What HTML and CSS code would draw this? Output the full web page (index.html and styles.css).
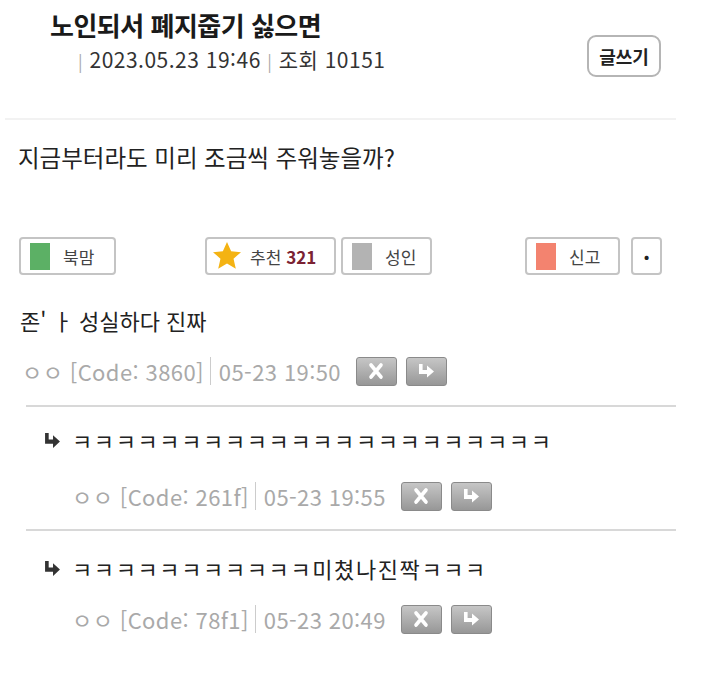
FILE: index.html
```html
<!DOCTYPE html>
<html lang="ko">
<head>
    <meta charset="UTF-8">
    <title>노인되서 폐지줍기 싫으면</title>
    <link rel="stylesheet" href="styles.css">
</head>
<body>

<div class="page">
    <div class="post-head">
        <div class="head-text">
            <h1 class="post-title">노인되서 폐지줍기 싫으면</h1>
            <div class="post-meta"><span class="bar">|</span> 2023.05.23 19:46 <span class="bar">|</span> 조회 10151</div>
        </div>
        <button class="write-btn">글쓰기</button>
    </div>

    <div class="top-line"></div>

    <p class="post-body">지금부터라도 미리 조금씩 주워놓을까?</p>

    <div class="vote-row">
        <button class="vbtn bookmark"><span class="sq green"></span>북맘</button>
        <button class="vbtn recommend">
            <svg class="star" width="32" height="32" viewBox="0 0 24 24"><path d="M12 1.5l3.1 7 7.4.6-5.6 4.9 1.7 7.5L12 17.6l-6.6 3.9 1.7-7.5L1.5 9.1l7.4-.6z" fill="#f4b313"/></svg>
            추천 <b class="count">321</b>
        </button>
        <button class="vbtn adult"><span class="sq gray"></span>성인</button>
        <button class="vbtn report"><span class="sq red"></span>신고</button>
        <button class="vbtn dot">·</button>
    </div>

    <div class="comment">
        <p class="c-text">존' ㅏ 성실하다 진짜</p>
        <div class="c-meta">
            <span>ㅇㅇ [Code: 3860]</span><span class="sep"></span><span>05-23 19:50</span>
            <span class="c-btns">
                <button class="ibtn"><svg width="20" height="18" viewBox="0 0 20 18"><path d="M5 3l10 12M15 3L5 15" stroke="#fff" stroke-width="3.6" stroke-linecap="round"/></svg></button>
                <button class="ibtn"><svg width="20" height="18" viewBox="0 0 20 18"><path d="M3 2h3.6v6H11V3.5L18 9.5l-7 6V12H3z" fill="#fff"/></svg></button>
            </span>
        </div>
    </div>

    <div class="reply">
        <p class="c-text"><svg class="re-arrow" width="17" height="17" viewBox="0 0 16 16"><path d="M1 1h3.4v6H8.5V3L15 9l-6.5 6v-4H1z" fill="#333"/></svg>ㅋㅋㅋㅋㅋㅋㅋㅋㅋㅋㅋㅋㅋㅋㅋㅋㅋㅋㅋㅋㅋㅋ</p>
        <div class="c-meta">
            <span>ㅇㅇ [Code: 261f]</span><span class="sep"></span><span>05-23 19:55</span>
            <span class="c-btns">
                <button class="ibtn"><svg width="20" height="18" viewBox="0 0 20 18"><path d="M5 3l10 12M15 3L5 15" stroke="#fff" stroke-width="3.6" stroke-linecap="round"/></svg></button>
                <button class="ibtn"><svg width="20" height="18" viewBox="0 0 20 18"><path d="M3 2h3.6v6H11V3.5L18 9.5l-7 6V12H3z" fill="#fff"/></svg></button>
            </span>
        </div>
    </div>

    <div class="reply last">
        <p class="c-text"><svg class="re-arrow" width="17" height="17" viewBox="0 0 16 16"><path d="M1 1h3.4v6H8.5V3L15 9l-6.5 6v-4H1z" fill="#333"/></svg>ㅋㅋㅋㅋㅋㅋㅋㅋㅋㅋㅋ미쳤나진짝ㅋㅋㅋ</p>
        <div class="c-meta">
            <span>ㅇㅇ [Code: 78f1]</span><span class="sep"></span><span>05-23 20:49</span>
            <span class="c-btns">
                <button class="ibtn"><svg width="20" height="18" viewBox="0 0 20 18"><path d="M5 3l10 12M15 3L5 15" stroke="#fff" stroke-width="3.6" stroke-linecap="round"/></svg></button>
                <button class="ibtn"><svg width="20" height="18" viewBox="0 0 20 18"><path d="M3 2h3.6v6H11V3.5L18 9.5l-7 6V12H3z" fill="#fff"/></svg></button>
            </span>
        </div>
    </div>
</div>

</body>
</html>
```

FILE: styles.css
```css
* {
    margin: 0;
    padding: 0;
    box-sizing: border-box;
}

body {
    font-family: "Noto Sans CJK KR", "Noto Sans", sans-serif;
    background-color: #fff;
    color: #222;
}

.page {
    width: 706px;
}

button {
    font-family: inherit;
    cursor: pointer;
}

/* 글 제목 */
.post-head {
    display: flex;
    justify-content: space-between;
    padding: 7px 45px 0 50px;
    height: 118px;
}

.post-title {
    font-size: 26px;
    font-weight: bold;
    line-height: 36px;
    color: #1a1a1a;
    letter-spacing: -0.5px;
}

.post-meta {
    margin-left: 28px;
    margin-top: 2px;
    font-size: 21px;
    line-height: 28px;
    color: #333;
    letter-spacing: 0.5px;
}

.post-meta .bar {
    color: #aaa;
    font-size: 17px;
}

.write-btn {
    margin-top: 28px;
    width: 74px;
    height: 42px;
    border: 2px solid #b5b5b5;
    border-radius: 9px;
    background-color: #fff;
    font-size: 18px;
    font-weight: bold;
    color: #222;
}

.top-line {
    height: 2px;
    margin: 0 30px 0 5px;
    background-color: #f2f2f2;
}

.post-body {
    padding-left: 18px;
    margin-top: 21px;
    font-size: 23.5px;
    line-height: 32px;
    color: #222;
}

/* 추천 버튼 */
.vote-row {
    display: flex;
    margin-top: 64px;
    padding-left: 19px;
}

.vbtn {
    display: flex;
    align-items: center;
    height: 38px;
    padding-left: 9px;
    border: 2px solid #c4c4c4;
    border-radius: 4px;
    background-color: #fff;
    font-size: 17px;
    color: #444;
}

.sq {
    display: inline-block;
    width: 20px;
    height: 27px;
    margin-right: 13px;
}

.green { background-color: #5cb065; }
.gray { background-color: #b3b3b3; }
.red { background-color: #f3836f; }

.bookmark { width: 97px; }

.recommend {
    width: 131px;
    margin-left: 89px;
    padding-left: 4px;
}

.star {
    margin-right: 7px;
}

.count {
    margin-left: 5px;
    color: #7b2232;
}

.adult {
    width: 91px;
    margin-left: 5px;
}

.report {
    width: 95px;
    margin-left: 93px;
}

.dot {
    width: 31px;
    margin-left: 11px;
    padding-left: 0;
    justify-content: center;
    font-size: 22px;
    font-weight: bold;
    color: #222;
}

/* 댓글 */
.c-text {
    display: flex;
    align-items: center;
    font-size: 22px;
    line-height: 30px;
    color: #222;
}

.c-meta {
    display: flex;
    align-items: center;
    margin-top: 20px;
    font-size: 22px;
    color: #a9a9a9;
    letter-spacing: 0.4px;
}

.sep {
    display: inline-block;
    width: 1px;
    height: 28px;
    margin: 0 8px 0 6px;
    background-color: #ccc;
}

.c-btns {
    display: flex;
    margin-left: 15px;
    gap: 9px;
}

.ibtn {
    display: flex;
    align-items: center;
    justify-content: center;
    width: 41px;
    height: 29px;
    border: 1px solid #8a8a8a;
    border-radius: 3px;
    background: linear-gradient(#c6c6c6, #979797);
}

.comment {
    margin: 30px 30px 0 26px;
    padding-bottom: 18px;
    border-bottom: 2px solid #d8d8d8;
}

.comment .c-text {
    margin-left: -6px;
}

.comment .c-meta {
    margin-left: -4px;
}

.reply {
    margin: 0 30px 0 26px;
    padding: 18px 0 17px 18px;
    border-bottom: 2px solid #d8d8d8;
}

.reply.last {
    padding-top: 22px;
    border-bottom: none;
}

.reply .c-text {
    letter-spacing: 1.6px;
}

.re-arrow {
    margin-right: 11px;
}

.reply .c-meta {
    margin-top: 25px;
    padding-left: 28px;
}

.reply.last .c-meta {
    margin-top: 20px;
}
```
